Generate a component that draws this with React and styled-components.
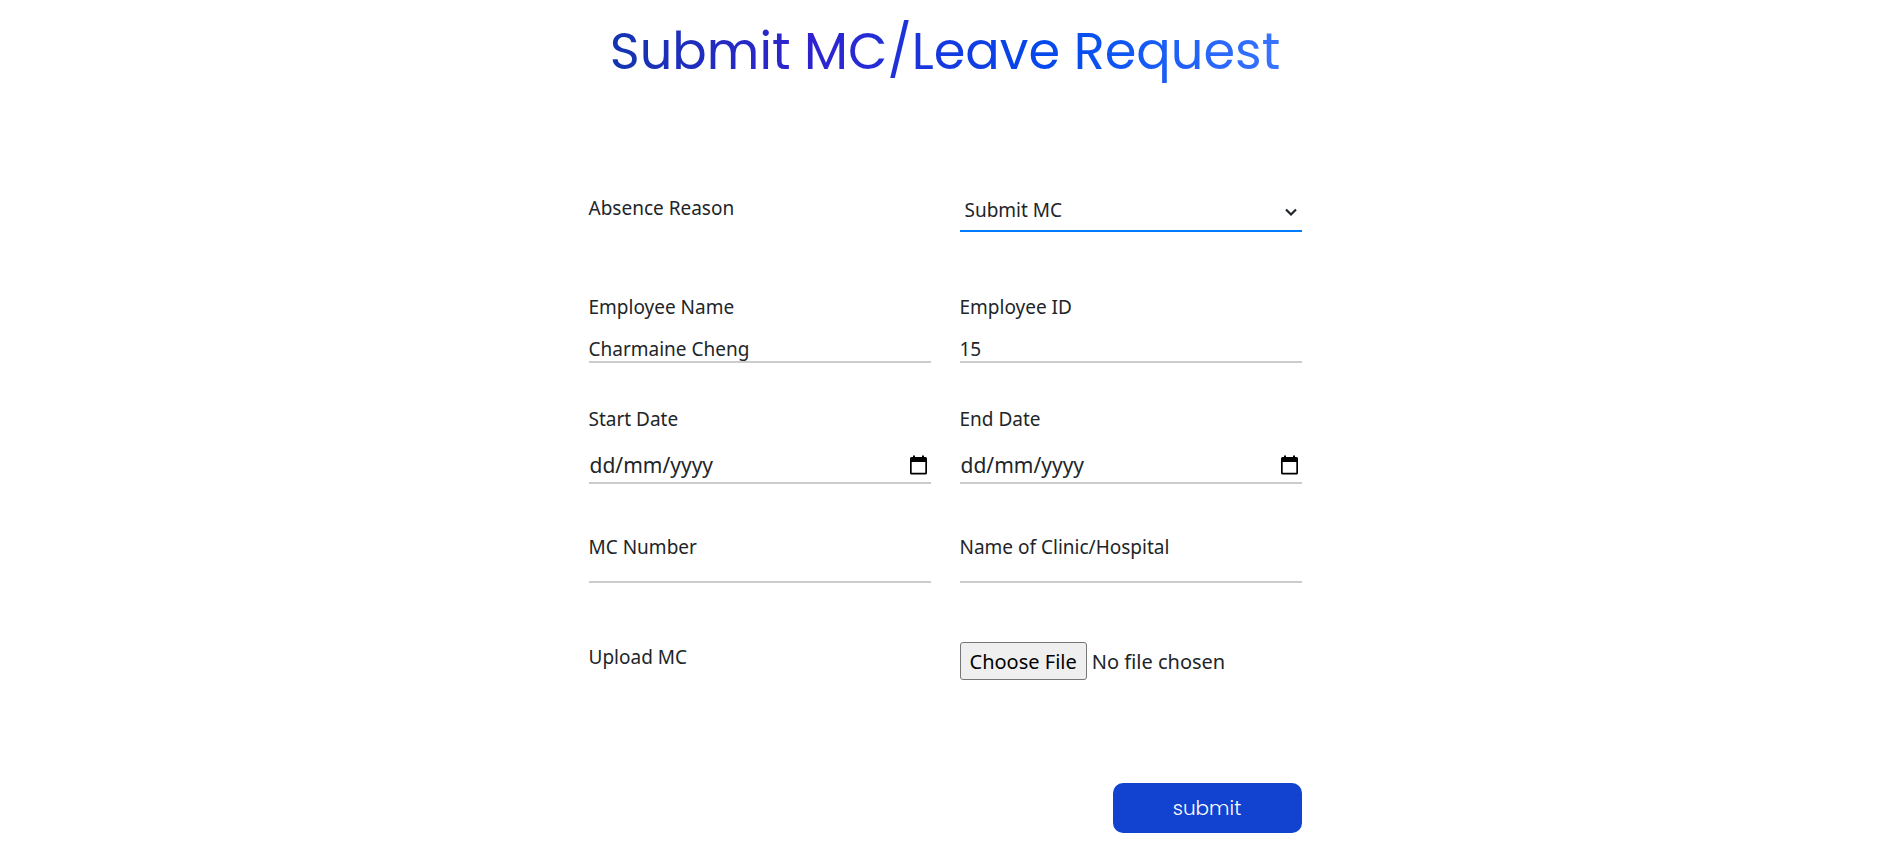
import React, { useState } from "react";
import styled, { createGlobalStyle } from "styled-components";

const GlobalStyle = createGlobalStyle`
  *, *::before, *::after { box-sizing: border-box; }
  body {
    margin: 0;
    background: #fff;
    color: #212529;
    font-family: "Segoe UI", "Noto Sans", "Open Sans", sans-serif;
    font-size: 19px;
    line-height: 24px;
  }
`;

const Page = styled.main`
  padding: 18px 24px 27px;
`;

const Title = styled.h1`
  width: fit-content;
  margin: 0 auto;
  font-family: Poppins, Inter, sans-serif;
  font-size: 51px;
  font-weight: 400;
  line-height: 66px;
  color: transparent;
  background: linear-gradient(to right, #1235b0 0%, #3023cf 30%, #0546ea 62%, #0850f0 72%, #3a74ff 100%);
  background-clip: text;
  -webkit-background-clip: text;
`;

const Form = styled.form`
  max-width: 713px;
  margin: 109px auto 0;
`;

const Row = styled.div`
  display: grid;
  grid-template-columns: 1fr 1fr;
  column-gap: 29px;
  margin-top: ${(p) => p.$space || 0}px;
`;

const Field = styled.div`
  display: flex;
  flex-direction: column;
  gap: ${(p) => (p.$tight ? 0 : 16)}px;
`;

const Label = styled.label`
  display: block;
  padding-top: ${(p) => (p.$inline ? 3 : 0)}px;
`;

const Underlined = styled.div`
  display: flex;
  align-items: center;
  height: ${(p) => p.$height}px;
  border-bottom: 2px solid ${(p) => (p.$active ? "#007bff" : "#ccc")};
`;

const TextInput = styled.input`
  flex: 1;
  min-width: 0;
  height: 100%;
  padding: ${(p) => (p.$large ? "0 1px" : "2px 0 0")};
  border: 0;
  outline: 0;
  background: transparent;
  color: inherit;
  font-family: inherit;
  font-size: ${(p) => (p.$large ? 21 : 19)}px;
  &::placeholder { color: inherit; opacity: 1; }
`;

const Select = styled.select`
  flex: 1;
  height: 100%;
  padding: 0 5px 3px;
  border: 0;
  outline: 0;
  appearance: none;
  background: transparent;
  color: inherit;
  font: inherit;
`;

const SelectBox = styled(Underlined)`
  display: grid;
  align-items: stretch;
  > * { grid-area: 1 / 1; }
  > svg { place-self: center end; margin-right: 4px; pointer-events: none; }
`;

const IconButton = styled.button`
  display: flex;
  padding: 0 3px;
  border: 0;
  background: transparent;
  color: #000;
`;

const FileInput = styled.input`
  width: 100%;
  color: inherit;
  font-family: inherit;
  font-size: 20px;
  &::file-selector-button {
    height: 38px;
    margin: 0 5px 0 0;
    padding: 0 9px;
    border: 1px solid #767676;
    border-radius: 3px;
    background: #efefef;
    color: #000;
    font: inherit;
  }
`;

const Actions = styled.div`
  display: flex;
  justify-content: flex-end;
  margin-top: 103px;
`;

const SubmitButton = styled.button`
  width: 189px;
  height: 50px;
  padding: 0;
  border: 0;
  border-radius: 10px;
  background: #1142d0;
  color: #fff;
  font-family: Poppins, Inter, sans-serif;
  font-size: 20px;
  font-weight: 300;
`;

const Chevron = () => (
  <svg width="14" height="10" viewBox="0 0 14 10" aria-hidden="true">
    <path d="M2 2.5 7 7.5 12 2.5" fill="none" stroke="#212529" strokeWidth="2.2" />
  </svg>
);

const CalendarIcon = () => (
  <svg width="19" height="20" viewBox="0 0 19 20" aria-hidden="true">
    <path
      fill="currentColor"
      fillRule="evenodd"
      d="M4 0.5h2v1.5h7V0.5h2v1.5h1.5A1.5 1.5 0 0 1 18 3.5V18a1.5 1.5 0 0 1-1.5 1.5h-14A1.5 1.5 0 0 1 1 18V3.5A1.5 1.5 0 0 1 2.5 2H4zM2.700 7v10.800h13.600V7z"
    />
  </svg>
);

function TextField({ id, label, initial = "", tight }) {
  const [value, setValue] = useState(initial);
  return (
    <Field $tight={tight}>
      <Label htmlFor={id}>{label}</Label>
      <Underlined $height={tight ? 24 : 28}>
        <TextInput id={id} type="text" value={value} onChange={(e) => setValue(e.target.value)} />
      </Underlined>
    </Field>
  );
}

function DateField({ id, label }) {
  return (
    <Field>
      <Label htmlFor={id}>{label}</Label>
      <Underlined $height={37}>
        <TextInput id={id} type="text" $large placeholder="dd/mm/yyyy" />
        <IconButton type="button" aria-label={`Choose ${label}`}>
          <CalendarIcon />
        </IconButton>
      </Underlined>
    </Field>
  );
}

export default function App() {
  return (
    <>
      <GlobalStyle />
      <Page>
        <Title>Submit MC/Leave Request</Title>
        <Form onSubmit={(e) => e.preventDefault()}>
          <Row>
            <Label htmlFor="reason" $inline>Absence Reason</Label>
            <SelectBox $height={39} $active>
              <Select id="reason" defaultValue="mc">
                <option value="mc">Submit MC</option>
                <option value="leave">Submit Leave</option>
              </Select>
              <Chevron />
            </SelectBox>
          </Row>
          <Row $space={63}>
            <TextField id="name" label="Employee Name" initial="Charmaine Cheng" />
            <TextField id="employee-id" label="Employee ID" initial="15" />
          </Row>
          <Row $space={44}>
            <DateField id="start" label="Start Date" />
            <DateField id="end" label="End Date" />
          </Row>
          <Row $space={51}>
            <TextField id="mc-number" label="MC Number" tight />
            <TextField id="clinic" label="Name of Clinic/Hospital" tight />
          </Row>
          <Row $space={59}>
            <Label htmlFor="upload" $inline>Upload MC</Label>
            <FileInput id="upload" type="file" />
          </Row>
          <Actions>
            <SubmitButton type="submit">submit</SubmitButton>
          </Actions>
        </Form>
      </Page>
    </>
  );
}
